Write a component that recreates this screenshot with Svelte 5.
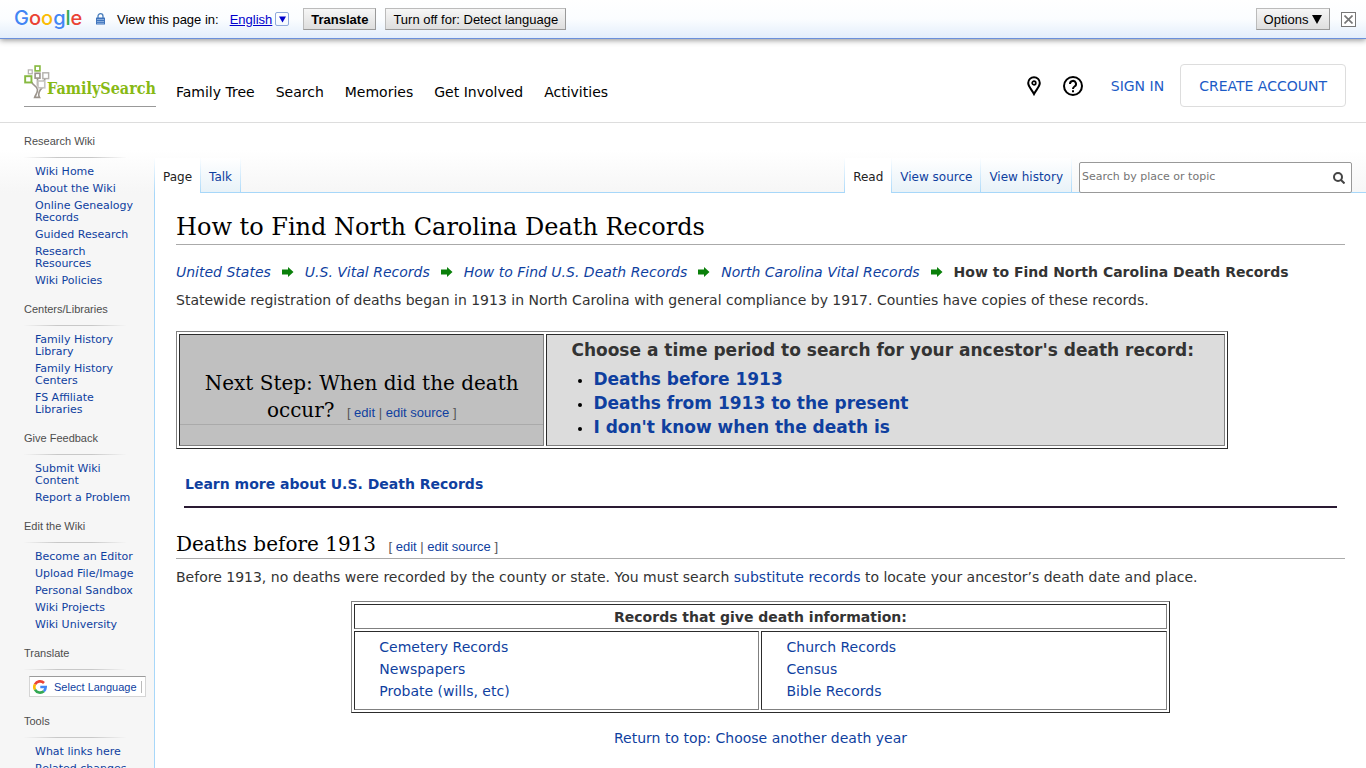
<script>
    let query = '';

    const navLinks = ['Family Tree', 'Search', 'Memories', 'Get Involved', 'Activities'];

    const sidebar = [
        {
            title: 'Research Wiki',
            links: ['Wiki Home', 'About the Wiki', 'Online Genealogy Records', 'Guided Research', 'Research Resources', 'Wiki Policies']
        },
        {
            title: 'Centers/Libraries',
            links: ['Family History Library', 'Family History Centers', 'FS Affiliate Libraries']
        },
        { title: 'Give Feedback', links: ['Submit Wiki Content', 'Report a Problem'] },
        {
            title: 'Edit the Wiki',
            links: ['Become an Editor', 'Upload File/Image', 'Personal Sandbox', 'Wiki Projects', 'Wiki University']
        },
        { title: 'Translate', translate: true, links: [] },
        { title: 'Tools', links: ['What links here', 'Related changes'] }
    ];

    const crumbs = ['United States', 'U.S. Vital Records', 'How to Find U.S. Death Records', 'North Carolina Vital Records'];
    const periods = ['Deaths before 1913', 'Deaths from 1913 to the present', "I don't know when the death is"];

    const records = [
        ['Cemetery Records', 'Newspapers', 'Probate (wills, etc)'],
        ['Church Records', 'Census', 'Bible Records']
    ];
</script>

<svelte:head>
    <title>How to Find North Carolina Death Records</title>
</svelte:head>

{#snippet editLinks()}
    <span class="edit">[ <a href="#edit">edit</a> | <a href="#source">edit source</a> ]</span>
{/snippet}

<div class="translate-bar">
    <span class="google"><span class="blue">G</span><span class="red">o</span><span class="yellow">o</span><span class="blue">g</span><span class="green">l</span><span class="red">e</span></span>
    <svg class="lock" width="9" height="12" viewBox="0 0 9 12">
        <path d="M2 5V3.200a2.500 2.500 0 0 1 5 0V5" fill="none" stroke="#4a7ebb" stroke-width="1.300" />
        <rect x="0" y="4.500" width="9" height="7" rx="0.500" fill="#3f74bd" />
        <path d="M1 6.500h7M1 8.500h7M1 10.300h7" stroke="#a9c6ea" stroke-width="0.700" />
    </svg>
    <span class="view-in">View this page in:</span>
    <a class="language" href="#language"><span class="language-name">English</span><span class="caret"><svg width="7" height="7" viewBox="0 0 7 7"><path d="M0 0.500h7L3.500 6.500z" fill="#0000cc" /></svg></span></a>
    <button class="bar-button bold">Translate</button>
    <button class="bar-button">Turn off for: Detect language</button>
    <button class="bar-button options">Options <svg width="10" height="9" viewBox="0 0 10 9"><path d="M0 0h10L5 9z" /></svg></button>
    <button class="close" aria-label="Close">
        <svg width="9" height="9" viewBox="0 0 9 9"><path d="M0.500 0.500l8 8M8.500 0.500l-8 8" stroke="#777" stroke-width="1.700" /></svg>
    </button>
</div>

<header class="site-header">
    <a class="logo" href="#home">
        <svg width="27" height="35" viewBox="0 0 27 35" fill="none">
            <path d="M8 18c1 4 5 3 6 8c0 4-2 5-3 8h5c-2-3 0-8 3-10M14 22V15M16 22c0-4 5-2 6-8" stroke="#9b948c" stroke-width="1.700" />
            <rect x="11.500" y="1.500" width="5" height="5" stroke="#87b940" stroke-width="1.700" />
            <rect x="4.500" y="5.500" width="4" height="4" stroke="#b5b2ae" stroke-width="1.300" />
            <rect x="11.500" y="9" width="5" height="5" fill="#fff" stroke="#9b948c" stroke-width="1.700" />
            <rect x="19.500" y="8.500" width="6" height="6" fill="#fff" stroke="#b5b2ae" stroke-width="1.500" />
            <rect x="1.200" y="12" width="6.500" height="6.500" fill="#fff" stroke="#87b940" stroke-width="2" />
            <rect x="14.500" y="17" width="7" height="7" fill="#fff" stroke="#c6c4c0" stroke-width="1.700" />
        </svg>
        <span class="wordmark">FamilySearch</span>
    </a>
    <nav class="main-nav">
        {#each navLinks as link}
            <a href="#nav">{link}</a>
        {/each}
    </nav>
    <div class="account">
        <a href="#places" aria-label="Locations">
            <svg width="14" height="20" viewBox="0 0 14 20" fill="none" stroke="#000">
                <path d="M7 18C5 14 1.200 10.500 1.200 7a5.800 5.800 0 0 1 11.600 0C12.800 10.500 9 14 7 18z" stroke-width="2" />
                <circle cx="7" cy="7" r="1.800" stroke-width="1.700" />
            </svg>
        </a>
        <a class="help" href="#help" aria-label="Help">
            <svg width="20" height="20" viewBox="0 0 20 20" fill="none" stroke="#000" stroke-width="2">
                <circle cx="10" cy="10" r="9" />
                <path d="M7 8a3 3 0 1 1 4.500 2.500C10.500 11.200 10 11.700 10 13" />
                <path d="M10 14.200v2" />
            </svg>
        </a>
        <a class="sign-in" href="#signin">SIGN IN</a>
        <button class="create">CREATE ACCOUNT</button>
    </div>
</header>

<div class="page">
    <aside class="sidebar">
        {#each sidebar as group}
            <section class="group">
                <h3>{group.title}</h3>
                {#if group.translate}
                    <button class="select-language">
                        <svg width="14" height="14" viewBox="0 0 14 14" fill="none" stroke-width="2.600">
                            <path d="M2 4.300A5.700 5.700 0 0 1 11 3" stroke="#ea4335" />
                            <path d="M2 4.300a5.700 5.700 0 0 0 0 5.400" stroke="#fbbc05" />
                            <path d="M2 9.700A5.700 5.700 0 0 0 10.800 11.200" stroke="#34a853" />
                            <path d="M10.800 11.200A5.700 5.700 0 0 0 12.700 7H7.300" stroke="#4285f4" />
                        </svg>
                        <span>Select Language</span>
                    </button>
                {:else}
                    <ul>
                        {#each group.links as link}
                            <li><a href="#wiki">{link}</a></li>
                        {/each}
                    </ul>
                {/if}
            </section>
        {/each}
    </aside>

    <div class="main">
        <div class="tabs">
            <a class="tab active first" href="#page">Page</a>
            <a class="tab" href="#talk">Talk</a>
            <span class="spacer"></span>
            <a class="tab active first" href="#read">Read</a>
            <a class="tab" href="#view-source">View source</a>
            <a class="tab" href="#history">View history</a>
            <form class="search" on:submit|preventDefault>
                <input type="text" aria-label="Search by place or topic" placeholder="Search by place or topic" bind:value={query} />
                <button aria-label="Search">
                    <svg width="12" height="12" viewBox="0 0 12 12" fill="none" stroke="#444" stroke-width="2">
                        <circle cx="5" cy="5" r="4" />
                        <path d="M8 8l3.500 3.500" />
                    </svg>
                </button>
            </form>
        </div>

        <main class="content">
            <h1>How to Find North Carolina Death Records</h1>

            <div class="crumbs">
                {#each crumbs as crumb}
                    <a href="#crumb">{crumb}</a>
                    <svg width="12" height="10" viewBox="0 0 12 10"><path d="M0 2.500h6V0l5.500 5L6 10V7.500H0z" fill="#0a800a" /></svg>
                {/each}
                <strong>How to Find North Carolina Death Records</strong>
            </div>

            <p class="intro">Statewide registration of deaths began in 1913 in North Carolina with general compliance by 1917. Counties have copies of these records.</p>

            <table class="step">
                <tbody>
                    <tr>
                        <td class="question">
                            <h2>Next Step: When did the death occur? {@render editLinks()}</h2>
                        </td>
                        <td class="answers">
                            <strong>Choose a time period to search for your ancestor's death record:</strong>
                            <ul>
                                {#each periods as period}
                                    <li><a href="#period">{period}</a></li>
                                {/each}
                            </ul>
                        </td>
                    </tr>
                </tbody>
            </table>

            <div class="learn"><a href="#learn">Learn more about U.S. Death Records</a></div>

            <h2>Deaths before 1913 {@render editLinks()}</h2>
            <p class="before">Before 1913, no deaths were recorded by the county or state. You must search <a href="#substitute">substitute records</a> to locate your ancestor’s death date and place.</p>

            <table class="records">
                <thead>
                    <tr><th colspan="2">Records that give death information:</th></tr>
                </thead>
                <tbody>
                    <tr>
                        {#each records as column}
                            <td>
                                {#each column as record}
                                    <a href="#record">{record}</a>
                                {/each}
                            </td>
                        {/each}
                    </tr>
                </tbody>
            </table>

            <p class="return"><a href="#top">Return to top: Choose another death year</a></p>
        </main>
    </div>
</div>

<style>
    :global(body) {
        font-family: Verdana, "DejaVu Sans", sans-serif;
        font-size: 14px;
        color: #333;
        background: #fff;
    }

    a {
        color: #0f3f9f;
        text-decoration: none;
    }

    button {
        font-family: inherit;
        cursor: pointer;
    }

    ul {
        list-style: none;
        margin: 0;
        padding: 0;
    }

    .translate-bar {
        display: flex;
        align-items: center;
        height: 39px;
        padding: 0 10px 0 14px;
        box-sizing: border-box;
        font-family: Arial, "Liberation Sans", sans-serif;
        font-size: 13px;
        color: #000;
        background: linear-gradient(#fff, #fbfdff 50%, #e3eefb);
        border-bottom: 1px solid #6b90da;
        box-shadow: 0 1px 6px #888;
    }

    .google {
        width: 82px;
        padding-bottom: 2px;
        font-family: Inter, sans-serif;
        font-size: 20px;
        font-weight: 500;
        line-height: 28px;
    }

    .blue { color: #4285f4; }
    .red { color: #ea4335; }
    .yellow { color: #fbbc05; }
    .green { color: #34a853; }

    .view-in {
        margin: 0 11px 0 12px;
    }

    .language {
        display: flex;
        align-items: center;
        margin-right: 14px;
        color: #0000cc;
    }

    .language-name {
        text-decoration: underline;
    }

    .caret {
        display: flex;
        align-items: center;
        justify-content: center;
        width: 12px;
        height: 12px;
        margin-left: 3px;
        border: 1px solid #8fa9dc;
        border-radius: 2px;
    }

    .bar-button {
        height: 22px;
        margin-right: 9px;
        padding: 0 7px;
        font-size: 13px;
        color: #000;
        background: linear-gradient(#f6f6f6, #dedede);
        border: 1px solid #999;
        border-color: #bbb #999 #999 #bbb;
    }

    .bold {
        font-weight: bold;
    }

    .options {
        margin-left: auto;
        margin-right: 11px;
    }

    .close {
        display: flex;
        align-items: center;
        justify-content: center;
        width: 15px;
        height: 15px;
        padding: 0;
        background: #fff;
        border: 1px solid #777;
    }

    .site-header {
        display: flex;
        align-items: flex-start;
        height: 83px;
        padding: 0 20px 0 24px;
        border-bottom: 1px solid #ddd;
    }

    .logo {
        display: flex;
        align-items: flex-start;
        width: 132px;
        height: 42px;
        margin: 25px 20px 0 0;
        border-bottom: 1px solid #999;
    }

    .wordmark {
        margin: 13px 0 0 -3px;
        font-family: "DejaVu Serif Condensed", "DejaVu Serif", serif;
        font-size: 16px;
        line-height: 24px;
        font-weight: bold;
        color: #87b914;
    }

    .main-nav {
        display: flex;
        gap: 21px;
        margin-top: 43px;
        line-height: 20px;
    }

    .main-nav a {
        color: #000;
    }

    .account {
        display: flex;
        align-items: center;
        margin: 25px 0 0 auto;
    }

    .account svg {
        display: block;
    }

    .help {
        margin: 0 28px 0 22px;
    }

    .sign-in {
        margin-right: 16px;
        color: #1c5bc6;
    }

    .create {
        height: 43px;
        padding: 0 18px;
        font-size: 14px;
        color: #1c5bc6;
        background: #fff;
        border: 1px solid #ddd;
        border-radius: 4px;
    }

    .page {
        display: flex;
        background: linear-gradient(#fff 27px, #f6f6f6 70px);
    }

    .sidebar {
        flex: none;
        width: 130px;
        padding: 12px 0 0 24px;
        font-size: 11px;
        line-height: 12px;
    }

    .group {
        margin-bottom: 16px;
    }

    .group h3 {
        margin: 0 28px 8px 0;
        padding-bottom: 10px;
        font-family: Arial, "Liberation Sans", sans-serif;
        font-size: 11px;
        font-weight: normal;
        color: #4d4d4d;
        border-bottom: 1px solid;
        border-image: linear-gradient(to right, #c8c8c800, #c8c8c8 33%, #c8c8c8 66%, #c8c8c800) 1;
    }

    .group ul {
        display: flex;
        flex-direction: column;
        gap: 5px;
        padding: 0 16px 0 11px;
    }

    .select-language {
        display: flex;
        align-items: center;
        height: 21px;
        margin: -2px 0 18px 5px;
        padding: 0 3px;
        font-family: Arial, "Liberation Sans", sans-serif;
        font-size: 11px;
        color: #0f3f9f;
        background: #fff;
        border: 1px solid #d5d5d5;
        border-top-color: #9b9b9b;
        white-space: nowrap;
    }

    .select-language span {
        margin-left: 7px;
        padding-right: 4px;
        border-right: 1px solid #bbb;
    }

    .main {
        display: flex;
        flex-direction: column;
        flex: 1;
        min-width: 0;
    }

    .tabs {
        display: flex;
        align-items: flex-end;
        height: 70px;
        padding-right: 14px;
        box-sizing: border-box;
        font-size: 12px;
        background: linear-gradient(#a7d7f9, #a7d7f9) bottom / 100% 1px no-repeat;
    }

    .tab {
        height: 35px;
        padding: 0 8px;
        line-height: 39px;
        background: linear-gradient(#fff, #e8f2f8) top / 100% 34px no-repeat;
        border-right: 1px solid;
        border-image: linear-gradient(#fff, #a7d7f9) 1;
    }

    .tab.first {
        border-left: 1px solid;
    }

    .tab.active {
        color: #222;
        background: #fff;
    }

    .spacer {
        flex: 1;
    }

    .search {
        display: flex;
        width: 273px;
        height: 31px;
        margin-left: 7px;
        box-sizing: border-box;
        background: #fff;
        border: 1px solid #999;
        border-radius: 2px;
    }

    .search input {
        flex: 1;
        min-width: 0;
        padding: 0 2px 3px;
        font-family: inherit;
        font-size: 11px;
        background: none;
        border: 0;
    }

    .search input::placeholder {
        color: #757575;
    }

    .search button {
        display: flex;
        align-items: center;
        padding: 0 6px;
        background: none;
        border: 0;
    }

    .content {
        flex: 1;
        padding: 16px 21px 0;
        background: #fff;
        border-left: 1px solid #a7d7f9;
    }

    .content h1,
    .content h2 {
        margin: 0;
        font-family: "Museo Slab", "DejaVu Serif", serif;
        font-weight: normal;
        color: #000;
        border-bottom: 1px solid #aaa;
    }

    .content h1 {
        padding-top: 2px;
        font-size: 24px;
        line-height: 33px;
    }

    .content h2 {
        padding-top: 3px;
        font-size: 20px;
        line-height: 27px;
    }

    .edit {
        display: inline-block;
        margin-left: 6px;
        font-family: Arial, "Liberation Sans", sans-serif;
        font-size: 13px;
        line-height: 15px;
        color: #555;
        white-space: nowrap;
    }

    .crumbs {
        display: flex;
        flex-wrap: wrap;
        align-items: center;
        column-gap: 11px;
        margin-top: 16px;
        line-height: 22px;
    }

    .crumbs a {
        font-style: italic;
    }

    .intro,
    .before {
        margin: 6px 0 20px;
        line-height: 22px;
    }

    table {
        border: 1px solid;
        border-color: #808080 #2c2c2c #2c2c2c #808080;
        border-spacing: 2px;
    }

    td,
    th {
        border: 1px solid;
        border-color: #2c2c2c #808080 #808080 #2c2c2c;
    }

    .step {
        width: 90%;
    }

    .question {
        width: 35%;
        padding: 14px 0 0;
        text-align: center;
        background: #c0c0c0;
    }

    .question h2 {
        padding: 0 16px;
    }

    .answers {
        padding: 3px 24px 6px;
        font-size: 17px;
        line-height: 24px;
        font-weight: bold;
        vertical-align: top;
        background: #dcdcdc;
    }

    .answers ul {
        margin-top: 5px;
        padding-left: 22px;
        list-style: disc;
    }

    .answers li::marker {
        color: #000;
        font-size: 14px;
    }

    .learn {
        margin: 24px 8px 20px;
        padding: 0 1px 11px;
        line-height: 22px;
        font-weight: bold;
        border-bottom: 2px solid #2a1a33;
    }

    .before {
        margin: 7px 0 13px;
    }

    .records {
        width: 70%;
        margin: 0 auto;
    }

    .records th {
        padding: 1px 1px 0;
        line-height: 22px;
    }

    .records td {
        width: 50%;
        padding: 4px 24px 7px;
        line-height: 22px;
    }

    .records td a {
        display: block;
    }

    .return {
        margin: 14px 0 20px;
        line-height: 22px;
        text-align: center;
    }
</style>
